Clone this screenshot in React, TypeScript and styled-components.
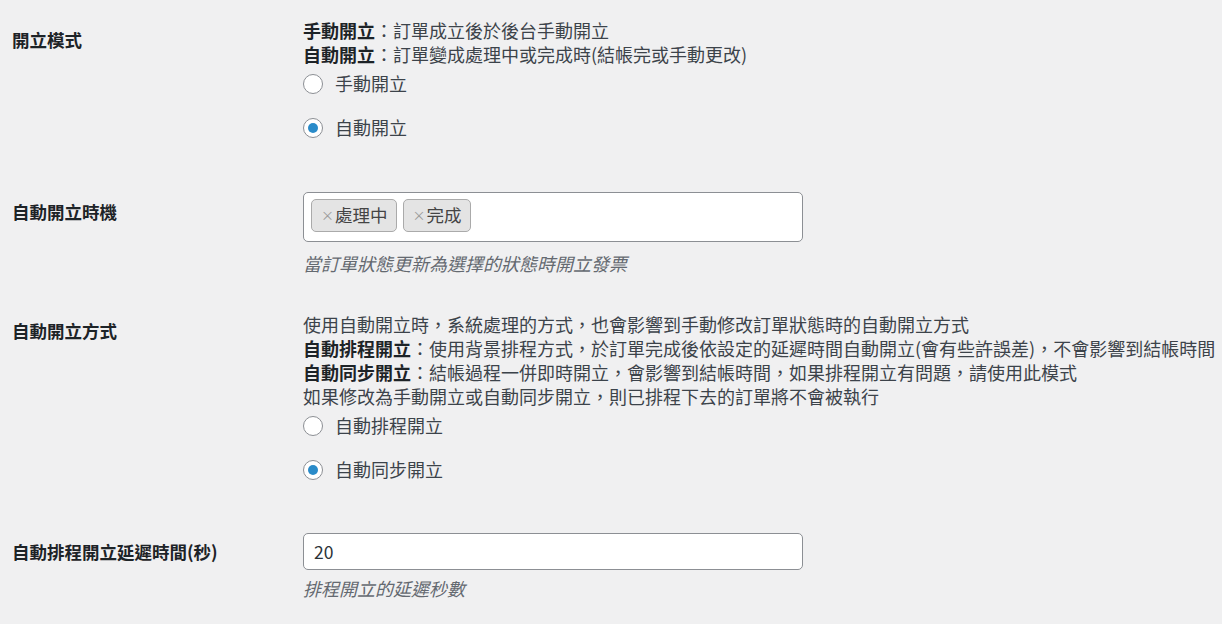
import styled, { createGlobalStyle } from "styled-components";

const GlobalStyle = createGlobalStyle`
  body {
    margin: 0;
    background: #f0f0f1;
    font-family: "Noto Sans CJK TC", "Noto Sans", sans-serif;
    color: #3c434a;
  }
`;

const Form = styled.div`
  padding-left: 12px;
  font-size: 18px;
  line-height: 23.75px;
`;

const Row = styled.div`
  display: grid;
  grid-template-columns: 291px 1fr;
  padding: 19px 0;
`;

const Label = styled.div<{ $top: number }>`
  padding-top: ${(p) => p.$top}px;
  font-weight: 600;
  color: #1d2327;
  font-size: 17.5px;
  line-height: 24px;
`;

const Field = styled.div`
  display: flex;
  flex-direction: column;
`;

const Line = styled.div`
  white-space: nowrap;
  b {
    font-weight: 600;
    color: #1d2327;
  }
`;

const RadioGroup = styled.div`
  display: flex;
  flex-direction: column;
  gap: 20px;
  margin: 5.5px 0 13.5px;
`;

const RadioLabel = styled.label`
  display: flex;
  align-items: center;
  gap: 12px;
  height: 24px;
`;

const Radio = styled.input`
  appearance: none;
  margin: 0;
  width: 20px;
  height: 20px;
  box-sizing: border-box;
  border: 1px solid #8c8f94;
  border-radius: 50%;
  background: #fff;
  display: grid;
  place-items: center;
  &:checked::before {
    content: "";
    width: 10px;
    height: 10px;
    border-radius: 50%;
    background: #2a8bc9;
  }
`;

const SelectBox = styled.div`
  width: 500px;
  height: 50px;
  box-sizing: border-box;
  border: 1px solid #8c8f94;
  border-radius: 5px;
  background: #fff;
  padding: 6px 7px;
  display: flex;
  gap: 6px;
  align-items: flex-start;
  margin-bottom: 3px;
`;

const Tag = styled.span`
  height: 33px;
  box-sizing: border-box;
  display: flex;
  align-items: center;
  padding: 0 8px 0 9px;
  background: #e4e4e4;
  border: 1px solid #aaa;
  border-radius: 5px;
  color: #444;
  font-size: 17.5px;
`;

const Remove = styled.span`
  color: #999;
  font-size: 13px;
  margin-right: 1px;
`;

const TextInput = styled.input`
  width: 500px;
  height: 37px;
  box-sizing: border-box;
  border: 1px solid #8c8f94;
  border-radius: 5px;
  background: #fff;
  padding: 0 10px;
  font-family: inherit;
  font-size: 17.5px;
  color: #2c3338;
  outline: none;
`;

const Description = styled.div`
  margin-top: 7px;
  font-style: italic;
  color: #646970;
`;

const modeOptions = [
  { label: "手動開立", checked: false },
  { label: "自動開立", checked: true },
];

const methodOptions = [
  { label: "自動排程開立", checked: false },
  { label: "自動同步開立", checked: true },
];

export default function App() {
  return (
    <>
      <GlobalStyle />
      <Form>
        <Row>
          <Label $top={9}>開立模式</Label>
          <Field>
            <Line>
              <b>手動開立</b>：訂單成立後於後台手動開立
            </Line>
            <Line>
              <b>自動開立</b>：訂單變成處理中或完成時(結帳完或手動更改)
            </Line>
            <RadioGroup>
              {modeOptions.map((o) => (
                <RadioLabel key={o.label}>
                  <Radio type="radio" name="mode" defaultChecked={o.checked} />
                  {o.label}
                </RadioLabel>
              ))}
            </RadioGroup>
          </Field>
        </Row>

        <Row>
          <Label $top={8}>自動開立時機</Label>
          <Field>
            <SelectBox>
              <Tag>
                <Remove>×</Remove>處理中
              </Tag>
              <Tag>
                <Remove>×</Remove>完成
              </Tag>
            </SelectBox>
            <Description>當訂單狀態更新為選擇的狀態時開立發票</Description>
          </Field>
        </Row>

        <Row>
          <Label $top={6}>自動開立方式</Label>
          <Field>
            <Line>使用自動開立時，系統處理的方式，也會影響到手動修改訂單狀態時的自動開立方式</Line>
            <Line>
              <b>自動排程開立</b>：使用背景排程方式，於訂單完成後依設定的延遲時間自動開立(會有些許誤差)，不會影響到結帳時間
            </Line>
            <Line>
              <b>自動同步開立</b>：結帳過程一併即時開立，會影響到結帳時間，如果排程開立有問題，請使用此模式
            </Line>
            <Line>如果修改為手動開立或自動同步開立，則已排程下去的訂單將不會被執行</Line>
            <RadioGroup>
              {methodOptions.map((o) => (
                <RadioLabel key={o.label}>
                  <Radio type="radio" name="method" defaultChecked={o.checked} />
                  {o.label}
                </RadioLabel>
              ))}
            </RadioGroup>
          </Field>
        </Row>

        <Row>
          <Label $top={7}>自動排程開立延遲時間(秒)</Label>
          <Field>
            <TextInput defaultValue="20" />
            <Description>排程開立的延遲秒數</Description>
          </Field>
        </Row>
      </Form>
    </>
  );
}
